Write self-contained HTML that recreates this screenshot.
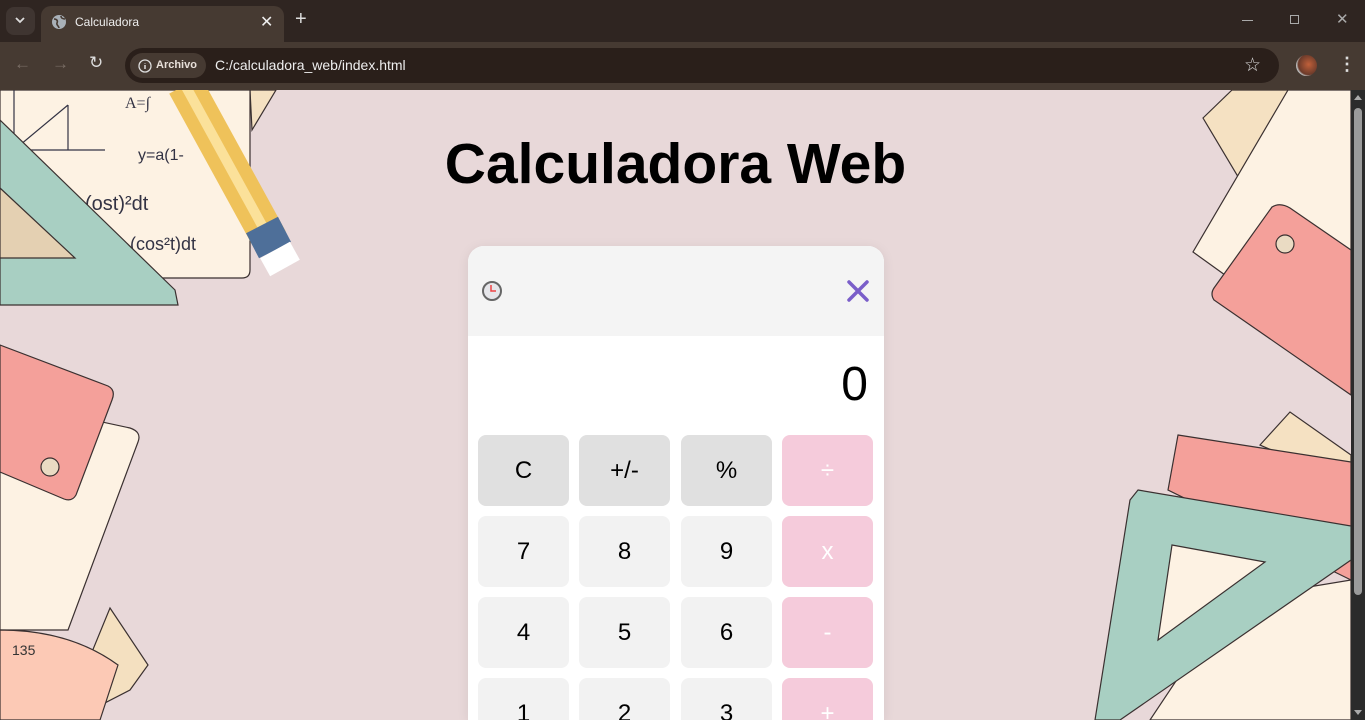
<!DOCTYPE html>
<html><head><meta charset="utf-8"><style>
*{margin:0;padding:0;box-sizing:border-box}
body{width:1365px;height:720px;overflow:hidden;background:#e8d8d9;font-family:"Liberation Sans",sans-serif;position:relative}
.tabs{position:absolute;left:0;top:0;width:1365px;height:42px;background:#2f2521}
.tb{position:absolute;left:0;top:42px;width:1365px;height:48px;background:#463a32}
.tab{position:absolute;left:41px;top:6px;width:243px;height:36px;background:#463a32;border-radius:10px 10px 0 0;color:#eee;font-size:12px}
.addr{position:absolute;left:125px;top:48px;width:1154px;height:35px;border-radius:18px;background:#2a1f1a;color:#eee;font-size:14px}
.chip{position:absolute;left:5px;top:5px;height:25px;width:76px;border-radius:13px;background:#463a32;font-size:11px;font-weight:bold;color:#e8e0da;line-height:25px;padding-left:26px}
.page{position:absolute;left:0;top:90px;width:1351px;height:630px;overflow:hidden}
h1{position:absolute;top:40px;left:0;width:1351px;text-align:center;font-size:57px;font-weight:bold;color:#000;line-height:1.2}
.calc{position:absolute;left:468px;top:156px;width:416px;height:474px;background:#fff;border-radius:16px 16px 0 0;box-shadow:0 2px 12px rgba(0,0,0,.08);overflow:hidden}
.hdr{height:90px;background:#f4f4f4;position:relative}
.disp{height:99px;text-align:right;padding-right:16px;font-size:48px;line-height:98px;color:#000}
.b{position:absolute;width:91px;height:71px;border-radius:8px;background:#f2f2f2;text-align:center;line-height:71px;font-size:24px;color:#000}
.g{background:#e0e0e0}.p{background:#f5cbdb;color:#fff}
.sb{position:absolute;left:1351px;top:90px;width:14px;height:630px;background:#2b2b2b}
</style></head><body>
<div class="tabs">
 <div style="position:absolute;left:6px;top:7px;width:29px;height:28px;border-radius:8px;background:#3f3531"></div>
 <svg style="position:absolute;left:14px;top:15px" width="12" height="10"><path d="M2 3l4 4 4-4" stroke="#ddd" stroke-width="1.8" fill="none"/></svg>
 <div class="tab">
  <svg style="position:absolute;left:10px;top:8px" width="16" height="16"><circle cx="8" cy="8" r="7" fill="#a9b1b8"/><path d="M3 5c3 0 4 2 3 4s2 3 2 5M10 2c0 2 2 3 4 3" stroke="#463a32" stroke-width="1.6" fill="none"/></svg>
  <span style="position:absolute;left:34px;top:9px">Calculadora</span>
  <span style="position:absolute;left:219px;top:6px;font-size:16px">✕</span>
 </div>
 <span style="position:absolute;left:295px;top:8px;color:#ddd;font-size:20px">+</span>
 <div style="position:absolute;left:1242px;top:20px;width:11px;height:1px;background:#aaa"></div>
 <div style="position:absolute;left:1290px;top:15px;width:9px;height:9px;border:1px solid #aaa"></div>
 <span style="position:absolute;left:1336px;top:10px;color:#aaa;font-size:15px">✕</span>
</div>
<div class="tb">
 <span style="position:absolute;left:14px;top:12px;color:#7a6e66;font-size:17px">←</span>
 <span style="position:absolute;left:52px;top:12px;color:#7a6e66;font-size:17px">→</span>
 <span style="position:absolute;left:89px;top:11px;color:#ddd;font-size:17px">↻</span>
</div>
<div class="addr">
 <div class="chip"><svg style="position:absolute;left:8px;top:6px" width="14" height="14"><circle cx="7" cy="7" r="6" stroke="#ddd" fill="none" stroke-width="1.3"/><path d="M7 6v4M7 4v.5" stroke="#ddd" stroke-width="1.5"/></svg>Archivo</div>
 <span style="position:absolute;left:90px;top:9px">C:/calculadora_web/index.html</span>
 <span style="position:absolute;left:1119px;top:6px;font-size:19px;color:#ddd">☆</span>
</div>
<div style="position:absolute;left:1296px;top:55px;width:21px;height:21px;border-radius:50%;background:radial-gradient(circle at 60% 45%,#c0603a,#6a3a2a 60%,#bbb 70%)"></div>
<span style="position:absolute;left:1338px;top:54px;color:#ddd;font-size:18px;font-weight:bold">⋮</span>

<div class="page">
<svg width="1351" height="630" style="position:absolute;left:0;top:0" stroke="#3a3030" stroke-width="1.2">
 <polygon points="250,0 276,0 252,40" fill="#f5e1c2"/>
 <path d="M0,0 H250 V180 q0,8 -8,8 H0 Z" fill="#fdf2e3"/>
 <g fill="none" stroke="#334"><path d="M14,0 V60 M10,60 H105 M14,60 L68,15 M68,15 V60"/>
 </g>
 <text x="125" y="18" font-size="16" fill="#334" stroke="none" font-family="Liberation Serif">A=∫</text>
 <text x="138" y="70" font-size="16" fill="#334" stroke="none">y=a(1-</text>
 <text x="85" y="120" font-size="20" fill="#334" stroke="none">(ost)²dt</text>
 <text x="130" y="160" font-size="18" fill="#334" stroke="none">(cos²t)dt</text>
 <path d="M0,30 L175,200 L178,215 H0 Z" fill="#a8cfc2"/>
 <path d="M0,98 L75,168 H0 Z" fill="#e4d0b2"/>
 <line x1="185" y1="-5" x2="270" y2="150" stroke="#efc25a" stroke-width="36"/>
 <line x1="185" y1="-5" x2="270" y2="150" stroke="#fbe19a" stroke-width="10"/>
 <line x1="262" y1="135" x2="275" y2="160" stroke="#4e6f99" stroke-width="36"/>
 <line x1="275" y1="160" x2="285" y2="178" stroke="#fff" stroke-width="34"/>
 <polygon points="110,518 148,575 130,600 62,635" fill="#f4e0c0"/>
 <path d="M0,310 L130,338 Q142,342 138,352 L68,540 H0 Z" fill="#fdf2e3"/>
 <path d="M0,255 L108,296 Q116,300 112,310 L76,405 Q72,412 64,409 L0,382 Z" fill="#f4a09a"/>
 <circle cx="50" cy="377" r="9" fill="#eadbc3"/>
 <path d="M0,540 Q70,540 118,575 L100,630 H0 Z" fill="#fcc9b5"/>
 <text x="12" y="565" font-size="14" fill="#333" stroke="none">135</text>
 <polygon points="1203,28 1232,0 1290,0 1240,90" fill="#f5e1c2"/>
 <polygon points="1288,0 1351,0 1351,190 1225,185 1193,162" fill="#fdf2e3"/>
 <path d="M1272,117 Q1280,112 1290,118 L1351,160 V305 L1214,210 Q1210,204 1214,198 Z" fill="#f4a09a"/>
 <circle cx="1285" cy="154" r="9" fill="#eadbc3"/>
 <polygon points="1260,355 1290,322 1351,365 1351,395" fill="#f5e1c2"/>
 <polygon points="1230,510 1351,490 1351,630 1150,630" fill="#fdf2e3"/>
 <path d="M1178,345 L1351,372 V490 L1168,400 Z" fill="#f4a09a"/>
 <path d="M1138,400 L1351,436 V470 L1120,630 H1095 L1130,410 Z" fill="#a8cfc2"/>
 <path d="M1172,455 L1265,472 L1158,550 Z" fill="#fdf2e3"/>
</svg>
<h1>Calculadora Web</h1>
<div class="calc">
 <div class="hdr">
  <svg style="position:absolute;left:13px;top:34px" width="22" height="22"><circle cx="11" cy="11" r="9" fill="#e6e6ea" stroke="#666" stroke-width="2"/><path d="M10 5v6h5" stroke="#e44" stroke-width="1.5" fill="none"/></svg>
  <svg style="position:absolute;left:378px;top:33px" width="24" height="24"><path d="M3 3L21 21M21 3L3 21" stroke="#7a5ec9" stroke-width="3.5" stroke-linecap="round"/></svg>
 </div>
 <div class="disp">0</div>
</div>
<div class="b g" style="left:478px;top:345px">C</div><div class="b g" style="left:579px;top:345px">+/-</div><div class="b g" style="left:681px;top:345px">%</div><div class="b p" style="left:782px;top:345px">÷</div>
<div class="b" style="left:478px;top:426px">7</div><div class="b" style="left:579px;top:426px">8</div><div class="b" style="left:681px;top:426px">9</div><div class="b p" style="left:782px;top:426px">x</div>
<div class="b" style="left:478px;top:507px">4</div><div class="b" style="left:579px;top:507px">5</div><div class="b" style="left:681px;top:507px">6</div><div class="b p" style="left:782px;top:507px">-</div>
<div class="b" style="left:478px;top:588px;height:42px;border-radius:8px 8px 0 0">1</div><div class="b" style="left:579px;top:588px;height:42px;border-radius:8px 8px 0 0">2</div><div class="b" style="left:681px;top:588px;height:42px;border-radius:8px 8px 0 0">3</div><div class="b p" style="left:782px;top:588px;height:42px;border-radius:8px 8px 0 0">+</div>
</div>
<div class="sb"><div style="position:absolute;left:3px;top:18px;width:8px;height:487px;border-radius:4px;background:#9b9b9b"></div>
<div style="position:absolute;left:3px;top:5px;border:4px solid transparent;border-bottom:5px solid #aaa;border-top:0"></div>
<div style="position:absolute;left:3px;top:620px;border:4px solid transparent;border-top:5px solid #aaa;border-bottom:0"></div></div>
</body></html>
